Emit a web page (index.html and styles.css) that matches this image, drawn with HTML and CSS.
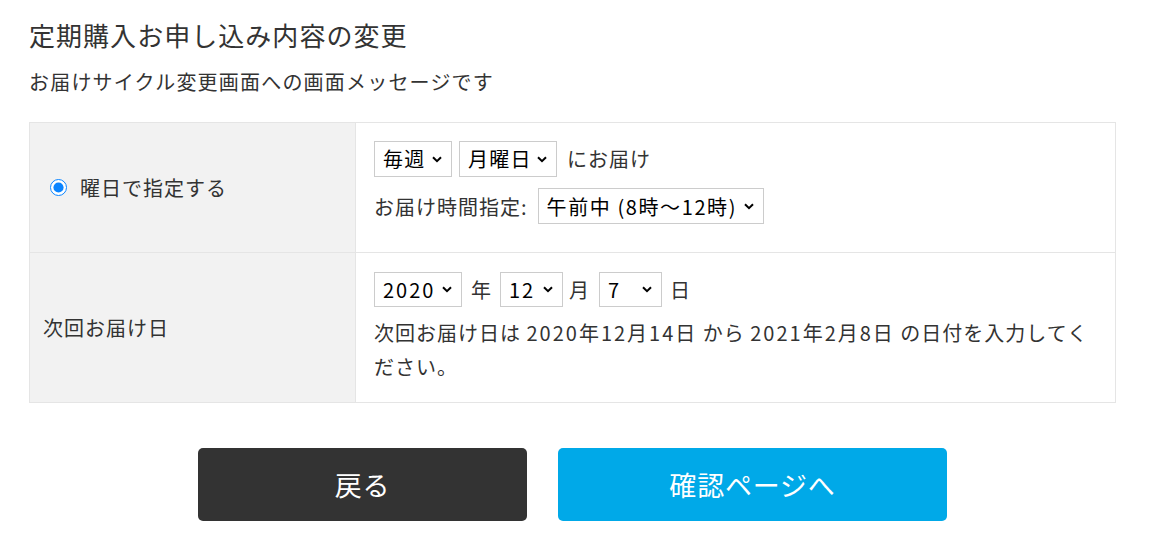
FILE: index.html
```html
<!DOCTYPE html>
<html lang="ja">
<head>
<meta charset="utf-8">
<title>定期購入お申し込み内容の変更</title>
<link rel="stylesheet" href="styles.css">
</head>
<body>
<div class="page">
  <h1 class="title">定期購入お申し込み内容の変更</h1>
  <p class="lead">お届けサイクル変更画面への画面メッセージです</p>

  <table class="form-table">
    <tr class="row-cycle">
      <th class="label-cell">
        <label class="radio-label"><input type="radio" name="cycle" checked class="radio"><span>曜日で指定する</span></label>
      </th>
      <td class="field-cell">
        <div class="line">
          <span class="sel w-week"><select><option>毎週</option></select><svg class="chev" viewBox="0 0 10 7"><path d="M1 1.2 5 5.2l4-4" fill="none" stroke="#000" stroke-width="2"/></svg></span>
          <span class="sel w-day"><select><option>月曜日</option></select><svg class="chev" viewBox="0 0 10 7"><path d="M1 1.2 5 5.2l4-4" fill="none" stroke="#000" stroke-width="2"/></svg></span>
          <span class="txt">にお届け</span>
        </div>
        <div class="line line-2">
          <span class="txt">お届け時間指定:</span>
          <span class="sel w-time"><select><option>午前中 (8時～12時)</option></select><svg class="chev" viewBox="0 0 10 7"><path d="M1 1.2 5 5.2l4-4" fill="none" stroke="#000" stroke-width="2"/></svg></span>
        </div>
      </td>
    </tr>
    <tr class="row-date">
      <th class="label-cell label-plain">次回お届け日</th>
      <td class="field-cell">
        <div class="line line-date">
          <span class="sel w-year"><select><option>2020</option></select><svg class="chev" viewBox="0 0 10 7"><path d="M1 1.2 5 5.2l4-4" fill="none" stroke="#000" stroke-width="2"/></svg></span>
          <span class="txt">年</span>
          <span class="sel w-month"><select><option>12</option></select><svg class="chev" viewBox="0 0 10 7"><path d="M1 1.2 5 5.2l4-4" fill="none" stroke="#000" stroke-width="2"/></svg></span>
          <span class="txt">月</span>
          <span class="sel w-date"><select><option>7</option></select><svg class="chev" viewBox="0 0 10 7"><path d="M1 1.2 5 5.2l4-4" fill="none" stroke="#000" stroke-width="2"/></svg></span>
          <span class="txt">日</span>
        </div>
        <p class="note">次回お届け日は <span class="num">2020年12月14日</span> から <span class="num">2021年2月8日</span> の日付を入力してください。</p>
      </td>
    </tr>
  </table>

  <div class="actions">
    <button class="btn btn-back" type="button">戻る</button>
    <button class="btn btn-next" type="button">確認ページへ</button>
  </div>
</div>
</body>
</html>
```

FILE: styles.css
```css
* { box-sizing: border-box; }
html, body { margin: 0; padding: 0; background: #fff; }
body {
  font-family: "Noto Sans CJK JP", "Noto Sans", sans-serif;
  color: #333;
}
.page {
  width: 1087px;
  margin-left: 29px;
  padding-top: 17px;
}
.title {
  margin: 0;
  font-size: 26px;
  line-height: 36px;
  font-weight: 400;
  letter-spacing: 0.04em;
}
.lead {
  margin: 14px 0 0;
  font-size: 20px;
  line-height: 30px;
  letter-spacing: 0.06em;
}
.form-table {
  margin-top: 25px;
  width: 1087px;
  border-collapse: collapse;
  font-size: 20px;
  letter-spacing: 0.05em;
}
.form-table th, .form-table td {
  border: 1px solid #e5e5e5;
  vertical-align: middle;
  padding: 0;
}
.label-cell {
  width: 326px;
  background: #f2f2f2;
  text-align: left;
  font-weight: 400;
  padding-left: 13px !important;
}
.radio-label {
  display: flex;
  align-items: center;
  gap: 13px;
  padding-left: 7px;
}
.radio {
  width: 17px;
  height: 17px;
  margin: 0;
  accent-color: #0a84ff;
}
.row-cycle { height: 130px; }
.row-date { height: 150px; }
.field-cell {
  padding: 17px 18px 28px 18px !important;
}
.row-date .field-cell { padding: 18px 18px 18px 18px !important; }
.line {
  display: flex;
  align-items: center;
  height: 36px;
}
.line-2 { margin-top: 12px; height: 35px; }
.txt { white-space: nowrap; }
.sel {
  position: relative;
  display: inline-block;
  height: 36px;
}
.sel select {
  appearance: none;
  -webkit-appearance: none;
  height: 100%;
  width: 100%;
  border: 1px solid #ccc;
  border-radius: 0;
  background: #fff;
  color: #000;
  font: inherit;
  letter-spacing: 0.06em;
  padding: 0 24px 0 8px;
  margin: 0;
}
.chev {
  position: absolute;
  right: 10px;
  top: 15px;
  width: 10px;
  height: 7px;
  pointer-events: none;
}
.w-week { width: 78px; margin-right: 7px; }
.w-day { width: 98px; margin-right: 10px; }
.line-2 .txt { margin-right: 10px; }
.w-time { width: 226px; }
.w-time select { letter-spacing: 0.08em; }
.line-date { height: 35px; }
.line-date .sel { height: 35px; }
.line-date .chev { top: 14px; }
.w-year { width: 88px; margin-right: 9px; }
.w-month { width: 63px; margin: 0 6px 0 8px; }
.w-date { width: 63px; margin: 0 8px 0 9px; }
.w-year select, .w-month select, .w-date select { letter-spacing: 0.1em; }
.note {
  margin: 9px 0 0;
  line-height: 34px;
}
.num { letter-spacing: 0.1em; }
.actions {
  display: flex;
  justify-content: center;
  gap: 31px;
  margin-top: 45px;
}
.btn {
  height: 73px;
  border: 0;
  border-radius: 5px;
  color: #fff;
  font-family: inherit;
  font-size: 27px;
  letter-spacing: 0.03em;
  cursor: pointer;
}
.btn-back { width: 329px; background: #333; }
.btn-next { width: 389px; background: #00a9e8; }
```
